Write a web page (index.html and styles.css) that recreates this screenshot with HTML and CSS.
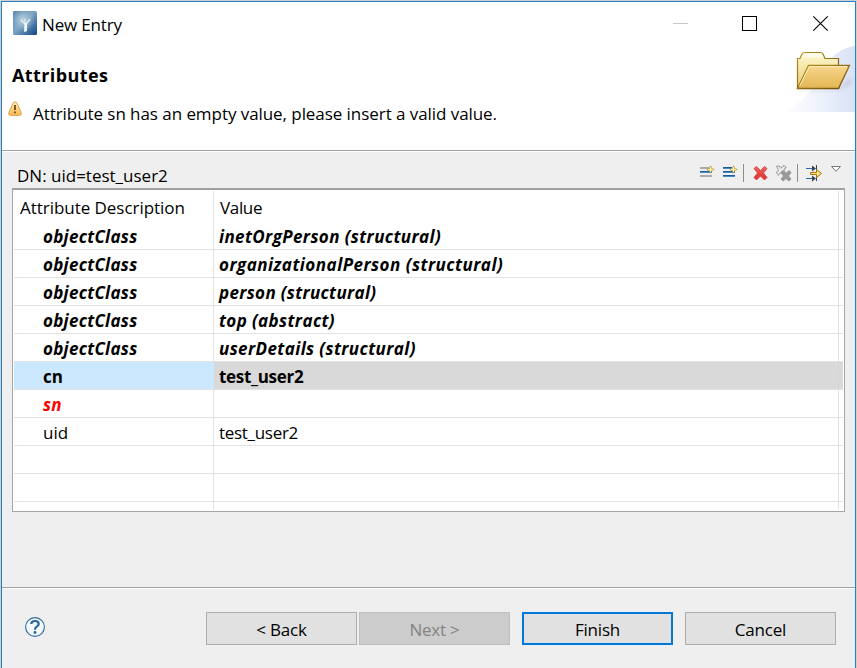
FILE: index.html
```
<!DOCTYPE html>
<html lang="en">
<head>
<meta charset="utf-8">
<title>New Entry</title>
<link rel="stylesheet" href="styles.css">
</head>
<body>
<div class="window">
  <header class="head">
    <div class="titlebar">
      <svg class="app-icon" width="24" height="24" viewBox="0 0 24 24">
        <defs><linearGradient id="app" x1="0" y1="0" x2="1" y2="1"><stop offset="0" stop-color="#4a7ca6"/><stop offset=".45" stop-color="#7fa6c4"/><stop offset="1" stop-color="#0d4585"/></linearGradient>
        <radialGradient id="glow" cx=".4" cy=".35" r=".5"><stop offset="0" stop-color="#c5d9e6" stop-opacity=".9"/><stop offset="1" stop-color="#a9c5d8" stop-opacity="0"/></radialGradient>
        <filter id="blur"><feGaussianBlur stdDeviation=".6"/></filter></defs>
        <rect width="24" height="24" rx="1.5" fill="url(#app)"/>
        <rect width="24" height="24" fill="url(#glow)"/>
        <path d="M12 13 8 9M12.500 14 17 8M12 13V8" stroke="#dce9f1" stroke-width="1.600" fill="none" filter="url(#blur)"/>
        <path d="M11 21 11.500 12 14 12 14 20Z" fill="#f4f9fb"/>
      </svg>
      <h1 class="title"><span class="t t-title">New Entry</span></h1>
      <div class="controls">
        <svg width="157" height="18" viewBox="0 0 157 18">
          <path d="M0 8.500H15" stroke="#c8c8c8"/>
          <rect x="69.500" y="1.500" width="14" height="14" fill="none" stroke="#000"/>
          <path d="M140.300 1.300 154.700 15.700M154.700 1.300 140.300 15.700" stroke="#000" stroke-width="1.100"/>
        </svg>
      </div>
    </div>
    <div class="banner">
      <div class="banner-text">
        <h2 class="heading"><span class="t t-heading">Attributes</span></h2>
        <div class="message">
          <svg width="14" height="15" viewBox="0 0 14 15">
            <defs><linearGradient id="warn" x2="0" y2="1"><stop offset="0" stop-color="#fff0be"/><stop offset="1" stop-color="#fcb84e"/></linearGradient></defs>
            <path d="M5.300 1.600Q7 -.3 8.700 1.600L13.200 11.500Q14 14.300 11.500 14.400H2.500Q0 14.300.800 11.500Z" fill="url(#warn)" stroke="#dca555"/>
            <path d="M7 4V9M7 10.500V12.300" stroke="#704016" stroke-width="1.700"/>
          </svg>
          <span class="t t-message">Attribute sn has an empty value, please insert a valid value.</span>
        </div>
      </div>
      <svg class="folder" width="75" height="66" viewBox="0 0 75 66">
        <defs>
          <linearGradient id="sky"><stop offset="0" stop-color="#fff"/><stop offset=".55" stop-color="#edf1fc"/><stop offset="1" stop-color="#d9e1f5"/></linearGradient>
          <linearGradient id="back" x2="0" y2="1"><stop offset="0" stop-color="#fffad2"/><stop offset="1" stop-color="#e8cb72"/></linearGradient>
          <linearGradient id="front" x2="0" y2="1"><stop offset="0" stop-color="#f8d58c"/><stop offset="1" stop-color="#e2b653"/></linearGradient>
          <linearGradient id="edge" x2="1" y2="1"><stop offset="0" stop-color="#b69422"/><stop offset="1" stop-color="#6e4c08"/></linearGradient>
          <filter id="soft"><feGaussianBlur stdDeviation="2"/></filter>
        </defs>
        <path d="M2 66Q30 55 45 20 57 2 75 0V66Z" fill="url(#sky)"/>
        <path d="M18 44H58L72 31 70 38 58 45H18Z" fill="#776b91" opacity=".3" filter="url(#soft)"/>
        <path d="M17.500 42.500V12.500H20L22 8Q23 6.500 25 6.500H40Q42 6.500 43 8L45 12.500H58.500V42.500Z" fill="url(#back)" stroke="url(#edge)" stroke-width="1.200"/>
        <path d="M21.500 11.500H43.500L41.500 7.500H24Z" fill="#fffde9"/>
        <path d="M17.500 42.500 28.500 19.500H69.500L58.500 42.500Z" fill="url(#front)" stroke="url(#edge)" stroke-width="1.300"/>
        <path d="M19.500 40 29.300 20.700H67" fill="none" stroke="#fff2c7"/>
      </svg>
    </div>
  </header>

  <main class="content">
    <div class="bar">
      <span class="t t-dn">DN: uid=test_user2</span>
      <svg class="tools" width="145" height="20" viewBox="0 0 145 20">
        <defs>
          <g id="star"><path d="M0-4 1.600-1.600 4 0 1.600 1.600 0 4-1.600 1.600-4 0-1.600-1.600Z" fill="#b18a20"/><path d="M0-2.500V2.500M-2.500 0H2.500" stroke="#fff4b8" stroke-width="1.300"/></g>
          <linearGradient id="red" x2="0" y2="1"><stop offset="0" stop-color="#ef6662"/><stop offset="1" stop-color="#dc292b"/></linearGradient>
        </defs>
        <path d="M1 4.500H10M1 12.500H13" stroke="#acacac"/><path d="M1 5.500H10M1 13.500H13" stroke="#acacac"/>
        <path d="M1 8.500H13" stroke="#1e5c9b"/><path d="M1 9.500H13" stroke="#4c8bc2"/>
        <use href="#star" x="11.500" y="6.500"/>
        <path d="M24 4.500H33M24 8.500H36M24 12.500H36" stroke="#1e5c9b"/><path d="M24 5.500H33M24 9.500H36M24 13.500H36" stroke="#4c8bc2"/>
        <use href="#star" x="34.500" y="6.500"/>
        <path d="M44.500 1V19M98.500 1V19" stroke="#8c8c8c"/>
        <path d="M55 5.500 57.500 3.500 61.500 7.500 65.500 3.500 68 5.500 64.500 10 68 14.500 65.500 17 61.500 13 57.500 17 55 14.500 58.500 10Z" fill="url(#red)" stroke="#db5152" stroke-linejoin="round"/>
        <path d="M77.500 3.500 79.500 2.500 82 5 85 2.500 87 4.500 84.500 7 87 10 84.500 12 82 9.500 79.500 12 77.500 9.500 79.500 7Z" fill="#efefef" stroke="#999" stroke-width="1.200" stroke-dasharray="2 .7"/>
        <path d="M82 9 84 7.500 87 10.500 90 7.500 92 9.500 89.500 13 92 16 90 18 87 15.500 84 18 82 16 84.500 13Z" fill="#999" stroke="#999" stroke-linejoin="round"/>
        <path d="M107 5.500H114M107 15.500H114" stroke="#2c6c9e"/>
        <path d="M113 2.500 117 5.500 113 8.500ZM113 12.500 117 15.500 113 18.500Z" fill="#344657"/>
        <path d="M117.500 2V8M117.500 13V18" stroke="#344657"/>
        <path d="M111.500 9.500H117.500V6.500L122.500 10.500 117.500 14.500V11.500H111.500Z" fill="#ffe589" stroke="#a87505"/>
        <path d="M132.500 3.500H141.500L137 8.300Z" fill="#fff" stroke="#777"/>
      </svg>
    </div>
    <div class="table">
      <div class="grid">
        <div class="row header"><div class="cell"><span class="t t-desc">Attribute Description</span></div><div class="cell"><span class="t t-value">Value</span></div></div>
        <div class="row must"><div class="cell"><span class="t t-oc">objectClass</span></div><div class="cell"><span class="t t-v1">inetOrgPerson (structural)</span></div></div>
        <div class="row must"><div class="cell"><span class="t t-oc">objectClass</span></div><div class="cell"><span class="t t-v2">organizationalPerson (structural)</span></div></div>
        <div class="row must"><div class="cell"><span class="t t-oc">objectClass</span></div><div class="cell"><span class="t t-v3">person (structural)</span></div></div>
        <div class="row must"><div class="cell"><span class="t t-oc">objectClass</span></div><div class="cell"><span class="t t-v4">top (abstract)</span></div></div>
        <div class="row must"><div class="cell"><span class="t t-oc">objectClass</span></div><div class="cell"><span class="t t-v5">userDetails (structural)</span></div></div>
        <div class="row selected"><div class="cell"><span class="t">cn</span></div><div class="cell"><span class="t t-v6">test_user2</span></div></div>
        <div class="row must error"><div class="cell"><span class="t t-oc">sn</span></div><div class="cell"></div></div>
        <div class="row"><div class="cell"><span class="t">uid</span></div><div class="cell"><span class="t t-v7">test_user2</span></div></div>
        <div class="row"><div class="cell"></div><div class="cell"></div></div>
        <div class="row"><div class="cell"></div><div class="cell"></div></div>
        <div class="row last"><div class="cell"></div><div class="cell"></div></div>
      </div>
    </div>
  </main>

  <footer class="foot">
    <svg class="help" width="20" height="20" viewBox="0 0 20 20">
      <circle cx="10" cy="10" r="9.400" fill="#f3f8fc" stroke="#31699e" stroke-width="1.100"/>
      <path d="M6.300 7Q6.300 4 10 4 13.700 4 13.700 7 13.700 8.700 11.500 9.900 10 10.700 10 12.700" fill="none" stroke="#2a639d" stroke-width="2.200"/>
      <circle cx="10" cy="15.500" r="1.400" fill="#2a639d"/>
    </svg>
    <div class="buttons">
      <button class="btn"><span class="t t-btn">&lt; Back</span></button>
      <button class="btn off" disabled><span class="t t-btn">Next &gt;</span></button>
      <button class="btn primary"><span class="t t-btn">Finish</span></button>
      <button class="btn"><span class="t t-btn">Cancel</span></button>
    </div>
  </footer>
</div>
</body>
</html>
```
FILE: styles.css
```
* { box-sizing: border-box; }
body { margin: 0; width: 857px; height: 668px; overflow: hidden; background: #cfcfcf; padding: 1px 1px 0; font: 17px/24px "Open Sans", "Noto Sans", sans-serif; color: #000; }
svg { display: block; flex: none; }
.t { white-space: nowrap; display: block; }
.window { height: 667px; border: 1px solid #2580c8; border-bottom: 0; background: #efefef; display: flex; flex-direction: column; }
.head { height: 149px; flex: none; background: #fff; border-bottom: 1px solid #a0a0a0; }
.titlebar { height: 44px; display: flex; padding: 9px 0 0 11px; }
.title { margin: 2px 0 0 5px; font-size: 17px; font-weight: 400; line-height: 24px; }
.controls { margin: 4px 25px 0 auto; }
.banner { display: flex; justify-content: space-between; }
.banner-text { padding: 17px 0 0 6px; }
.heading { margin: 0 0 0 4px; font-size: 18px; line-height: 24px; }
.message { display: flex; gap: 11px; padding-top: 14px; }
.content { height: 437px; flex: none; border-top: 1px solid #fff; border-bottom: 1px solid #a0a0a0; padding: 0 10px; }
.bar { height: 36px; display: flex; justify-content: space-between; padding: 11px 1px 0 5px; }
.table { height: 324px; border: 1px solid #a5a6aa; border-top: 2px solid #a0a0a0; background: #fff; padding: 1px; }
.grid { height: 319px; overflow: hidden; background: linear-gradient(#e2e2e2, #e2e2e2) 824px 0 / 1px 100% no-repeat; }
.row { display: grid; grid-template-columns: 200px 1fr; height: 28px; border-bottom: 1px solid #e2e2e2; }
.row.header { height: 31px; border: 0; }
.row.last { height: 9px; border: 0; }
.cell { padding: 3px 0 0 29px; line-height: 24px; }
.cell:first-child { border-right: 1px solid #e2e2e2; }
.cell + .cell { padding-left: 5px; }
.header .cell { padding: 5px 0 0 6px; }
.must { font-weight: 700; font-style: italic; }
.error { color: #f00; }
.selected { font-weight: 700; }
.selected .cell { background: #cce8ff; border-color: #cce8ff; }
.selected .cell + .cell { background: linear-gradient(#d4d4d4, #d4d4d4) 624px 0 / 1px 100% no-repeat #d9d9d9; }
.foot { flex: 1; border-top: 1px solid #fff; display: flex; padding: 23px 19px 0 23px; justify-content: space-between; }
.help { margin-top: 5px; }
.buttons { display: flex; }
.btn { width: 151px; height: 33px; margin-left: 12px; border: 1px solid #adadad; background: #e1e1e1; padding: 3px 0 0; font: inherit; color: #000; display: flex; align-items: center; justify-content: center; }
.btn.off { margin-left: 2px; background: #ccc; border-color: #bfbfbf; color: #838383; }
.btn.primary { border: 2px solid #0078d7; }

/* Tracking per label */
.t-title { letter-spacing: -.17px; }
.t-heading { letter-spacing: .4px; }
.t-message { letter-spacing: -.06px; padding-top: 1px; }
.t-dn { padding-top: 1px; }
.t-desc { letter-spacing: -.04px; }
.t-value { letter-spacing: -.35px; }
.t-oc { letter-spacing: .28px; }
.t-v1 { letter-spacing: .39px; }
.t-v2 { letter-spacing: .48px; }
.t-v3 { letter-spacing: .33px; }
.t-v4 { letter-spacing: .38px; }
.t-v5 { letter-spacing: .4px; }
.t-v6, .t-v7 { letter-spacing: -.3px; }
.t-btn { letter-spacing: -.2px; }
```
